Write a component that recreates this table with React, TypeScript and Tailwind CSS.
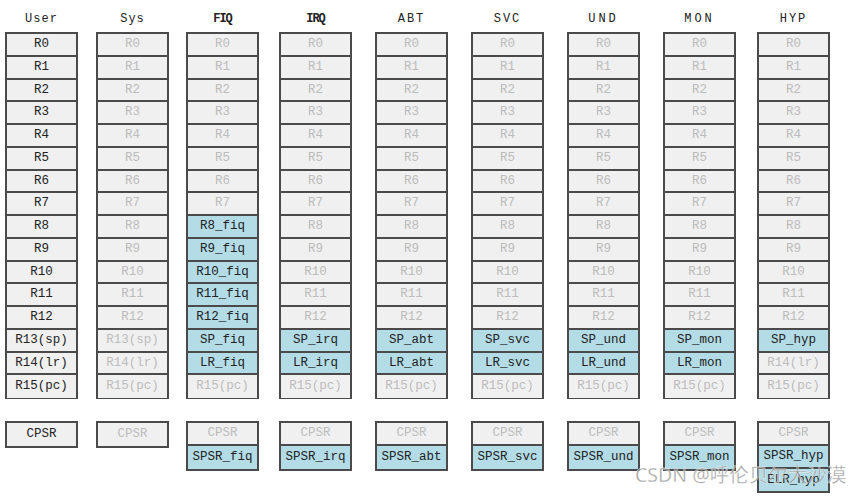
import React from "react";

type Cell = { t: string; on?: boolean; blue?: boolean };

const base = [
  "R0","R1","R2","R3","R4","R5","R6","R7","R8","R9","R10","R11","R12","R13(sp)","R14(lr)","R15(pc)",
];

function regs(mode: string | null, opts: { fiq?: boolean; noLr?: boolean } = {}): Cell[] {
  if (mode === null) return base.map((t) => ({ t, on: true }));
  return base.map((t, i) => {
    if (opts.fiq && i >= 8 && i <= 12) return { t: `R${i}_fiq`, on: true, blue: true };
    if (i === 13) return { t: `SP_${mode}`, on: true, blue: true };
    if (i === 14 && !opts.noLr) return { t: `LR_${mode}`, on: true, blue: true };
    return { t };
  });
}

const sys: Cell[] = base.map((t) => ({ t }));

type Col = { h: string; ml: string; hcls: string; rows: Cell[]; cpsrOn?: boolean; spsr?: string; elr?: string };

const cols: Col[] = [
  { h: "User", ml: "ml-[5px]", hcls: "tracking-[1px]", rows: regs(null), cpsrOn: true },
  { h: "Sys", ml: "ml-[18px]", hcls: "tracking-[1px]", rows: sys },
  { h: "FIQ", ml: "ml-[17px]", hcls: "tracking-[-1px] font-semibold", rows: regs("fiq", { fiq: true }), spsr: "SPSR_fiq" },
  { h: "IRQ", ml: "ml-[20px]", hcls: "tracking-[-1px] font-semibold", rows: regs("irq"), spsr: "SPSR_irq" },
  { h: "ABT", ml: "ml-[23px]", hcls: "tracking-[2px]", rows: regs("abt"), spsr: "SPSR_abt" },
  { h: "SVC", ml: "ml-[23px]", hcls: "tracking-[2px]", rows: regs("svc"), spsr: "SPSR_svc" },
  { h: "UND", ml: "ml-[23px]", hcls: "tracking-[3px]", rows: regs("und"), spsr: "SPSR_und" },
  { h: "MON", ml: "ml-[23px]", hcls: "tracking-[3px]", rows: regs("mon"), spsr: "SPSR_mon" },
  { h: "HYP", ml: "ml-[21px]", hcls: "tracking-[2px]", rows: regs("hyp", { noLr: true }), spsr: "SPSR_hyp", elr: "ELR_hyp" },
];

function CellBox({ c, last }: { c: Cell; last?: boolean }) {
  return (
    <div
      className={`flex h-[22.75px] items-center justify-center ${last ? "" : "border-b-2 border-[#4a4a4a]"} ${
        c.blue ? "bg-[#b3dce7]" : "bg-[#f0f0f0]"
      } ${c.on ? "text-[#222]" : "text-[#bcbcbc]"}`}
    >
      {c.t}
    </div>
  );
}

export default function App() {
  return (
    <div
      className="relative h-[497px] w-[861px] overflow-hidden bg-white text-[12.5px] leading-none"
      style={{ fontFamily: '"Liberation Mono", "DejaVu Sans Mono", monospace' }}
    >
      <div className="flex">
        {cols.map((col) => (
          <div key={col.h} className={`flex w-[73px] flex-col ${col.ml}`}>
            <div className={`flex h-[32px] items-center justify-center pt-[5px] text-[12px] text-[#222] ${col.hcls}`}>
              {col.h}
            </div>
            <div className="border-2 border-b-[1px] border-[#4a4a4a] bg-[#f0f0f0]">
              {col.rows.map((c, i) => (
                <CellBox key={i} c={c} last={i === col.rows.length - 1} />
              ))}
            </div>
            <div className="mt-[22px] border-2 border-[#4a4a4a]">
              <CellBox c={{ t: "CPSR", on: col.cpsrOn }} last={!col.spsr} />
              {col.spsr && <CellBox c={{ t: col.spsr, on: true, blue: true }} last={!col.elr} />}
              {col.elr && <CellBox c={{ t: col.elr, on: true, blue: true }} last />}
            </div>
          </div>
        ))}
      </div>
      <div
        className="absolute left-[635px] top-[465px] text-[19.5px] leading-none text-[#8c8c8c]/80"
        style={{ fontFamily: '"Noto Sans", "Noto Sans CJK SC", sans-serif', WebkitTextStroke: "0.3px #ffffff" }}
      >
        CSDN @呼伦贝尔大沙漠
      </div>
    </div>
  );
}
